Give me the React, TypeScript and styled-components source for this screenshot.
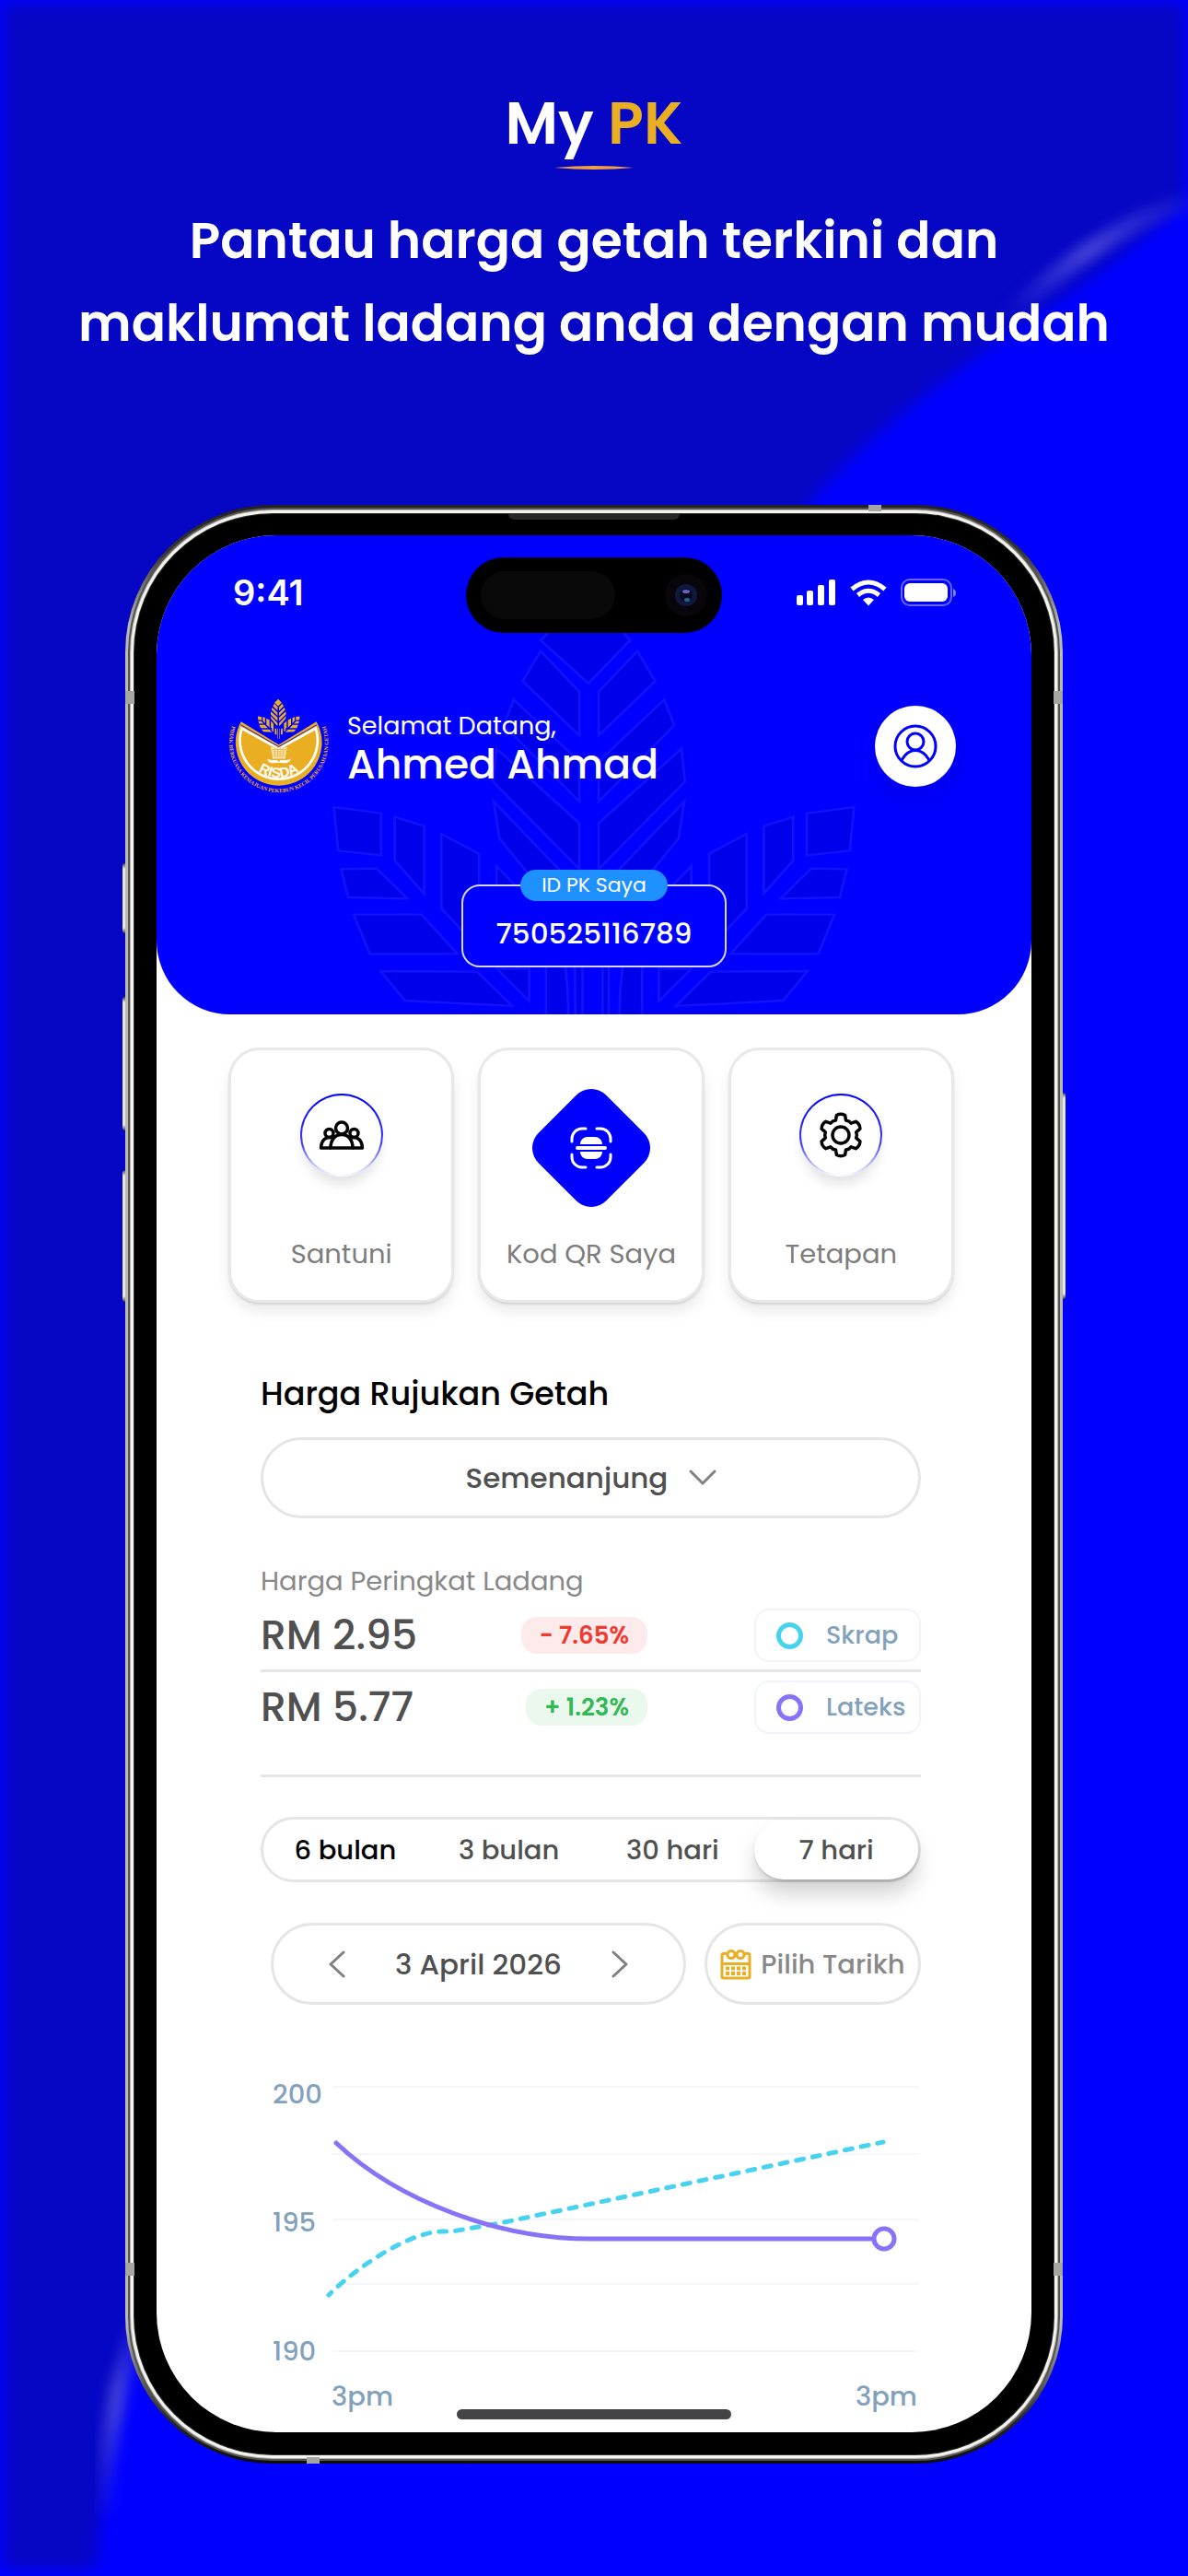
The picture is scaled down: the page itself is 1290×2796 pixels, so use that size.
import React from "react";
import styled, { createGlobalStyle } from "styled-components";

const GlobalStyle = createGlobalStyle`
  *, *::before, *::after { box-sizing: border-box; }
  body {
    margin: 0;
    background: #0000ff;
    font-family: Poppins, Inter, "Open Sans", sans-serif;
    -webkit-font-smoothing: antialiased;
  }
  h1, h2, p { margin: 0; }
  button, select {
    font: inherit;
    color: inherit;
    margin: 0;
    padding: 0;
    border: 0;
    background: none;
    cursor: pointer;
  }
`;

const gold = "#e9ae22";
const cyan = "#47d3ef";
const purple = "#8a72f8";
const line = "#e5e5e5";
const slate = "#82a1bb";

/* ---------- promo page ---------- */

const Page = styled.main`
  position: relative;
  min-height: 100vh;
  display: flex;
  flex-direction: column;
  align-items: center;
  padding: 89px 40px 122px;
  overflow: hidden;
`;

const Backdrop = styled.svg`
  position: absolute;
  inset: 0;
  width: 100%;
  height: 100%;
`;

const Hero = styled.header`
  position: relative;
  display: flex;
  flex-direction: column;
  align-items: center;
  text-align: center;
  color: #fff;
`;

const Brand = styled.p`
  font-size: 64px;
  line-height: 90px;
  font-weight: 600;
`;

const BrandAccent = styled.span`
  color: ${gold};
`;

const Flourish = styled.svg`
  display: block;
  width: 86px;
  height: 6px;
`;

const Headline = styled.h1`
  margin-top: 31px;
  font-size: 55px;
  line-height: 90px;
  font-weight: 600;
`;

/* ---------- phone ---------- */

const Frame = styled.div`
  position: relative;
  width: 100%;
  max-width: 1018px;
  margin-top: 152px;
  padding: 10px;
  border-radius: 160px;
  background: linear-gradient(#24221f 0, #34322f 50px, #b9b9b5 130px, #b9b9b5 calc(100% - 150px), #2a2926 calc(100% - 50px), #0c0c0a 100%);
`;

const Bezel = styled.div`
  padding: 23px 24px 24px;
  border-radius: 150px;
  background: #000;
  box-shadow: 0 0 0 1px #33312d, 0 0 0 4px #f3f3ef, 0 0 0 5px #b5b4b0, 0 0 0 7px #55534f;
`;

const SideKey = styled.span<{ $side: "left" | "right"; $top: number; $length: number }>`
  position: absolute;
  ${(p) => p.$side}: -3px;
  top: ${(p) => p.$top}px;
  width: 3px;
  height: ${(p) => p.$length}px;
  border-radius: ${(p) => (p.$side === "left" ? "3px 0 0 3px" : "0 3px 3px 0")};
  background: linear-gradient(#44423f, #e6e6e3 6px, #e6e6e3 calc(100% - 6px), #44423f);
`;

const Antenna = styled.span<{ $edge: "left" | "right" | "top" | "bottom"; $at: number; $fromEnd?: boolean }>`
  position: absolute;
  background: #a5a5a2;
  ${(p) => p.$edge}: 0;
  ${(p) =>
    p.$edge === "left" || p.$edge === "right"
      ? `${p.$fromEnd ? "bottom" : "top"}: ${p.$at}px; width: 10px; height: 14px;`
      : `${p.$fromEnd ? "right" : "left"}: ${p.$at}px; width: 14px; height: 7px;`}
`;

const Speaker = styled.span`
  position: absolute;
  top: 10px;
  left: 50%;
  width: 186px;
  height: 6px;
  margin-left: -93px;
  border-radius: 0 0 6px 6px;
  background: #262626;
`;

const Screen = styled.div`
  position: relative;
  overflow: hidden;
  border-radius: 130px;
  background: #fff;
`;

const HomeBar = styled.span`
  position: absolute;
  left: 50%;
  bottom: 14px;
  width: 298px;
  height: 11px;
  margin-left: -149px;
  border-radius: 6px;
  background: #444446;
`;

/* ---------- app header ---------- */

const AppHeader = styled.header`
  position: relative;
  overflow: hidden;
  padding: 24px 77px 51px;
  border-radius: 0 0 80px 80px;
  background: #0000ff;
  color: #fff;
`;

const Watermark = styled.svg`
  position: absolute;
  left: 50%;
  top: 99px;
  width: 610px;
  height: 430px;
  margin-left: -305px;
  overflow: visible;
`;

const StatusBar = styled.div`
  position: relative;
  display: grid;
  grid-template-columns: 1fr auto 1fr;
  align-items: center;
`;

const Clock = styled.time`
  padding: 0 0 6px 6px;
  font-family: Inter, sans-serif;
  font-size: 38px;
  line-height: 48px;
  font-weight: 600;
`;

const Island = styled.div`
  width: 278px;
  height: 82px;
  display: flex;
  align-items: center;
  justify-content: space-between;
  padding: 0 16px;
  border-radius: 41px;
  background: #000;
`;

const Sensor = styled.span`
  width: 146px;
  height: 52px;
  border-radius: 26px;
  background: #090909;
`;

const Lens = styled.svg`
  width: 46px;
  height: 46px;
`;

const StatusIcons = styled.svg`
  justify-self: end;
  width: 174px;
  height: 30px;
  margin: 0 5px 6px 0;
`;

const Profile = styled.div`
  position: relative;
  display: flex;
  align-items: center;
  gap: 20px;
  margin-top: 70px;
  padding-right: 5px;
`;

const Emblem = styled.svg`
  flex: none;
  width: 110px;
  height: 105px;
`;

const Welcome = styled.div`
  flex: 1;
`;

const Greeting = styled.p`
  font-size: 27px;
  line-height: 40px;
  font-weight: 400;
`;

const UserName = styled.p`
  font-size: 44px;
  line-height: 44px;
  font-weight: 500;
`;

const AvatarButton = styled.button`
  display: grid;
  place-items: center;
  width: 88px;
  height: 88px;
  border-radius: 50%;
  background: #fff;
  box-shadow: 0 12px 40px rgba(0, 0, 120, 0.12);
`;

const IdBox = styled.div`
  position: relative;
  width: 288px;
  height: 90px;
  display: grid;
  place-items: center;
  margin: 98px auto 0;
  padding-top: 16px;
  border: 2px solid #d6d6ff;
  border-radius: 20px;
  background: #0000ff;
  font-size: 31px;
  line-height: 40px;
  font-weight: 500;
`;

const IdTag = styled.span`
  position: absolute;
  top: -18px;
  left: 50%;
  width: 160px;
  margin-left: -80px;
  border-radius: 17px;
  background: #1e90ff;
  font-size: 22px;
  line-height: 34px;
  font-weight: 400;
  text-align: center;
`;

/* ---------- shortcuts ---------- */

const Shortcuts = styled.nav`
  display: grid;
  grid-template-columns: repeat(3, 1fr);
  gap: 26px;
  padding: 36px 84px 0 78px;
`;

const ShortcutCard = styled.button`
  display: flex;
  flex-direction: column;
  align-items: center;
  padding: 41px 0 30px;
  border: 3px solid #e8e8e8;
  border-radius: 34px;
  background: #fff;
  box-shadow: 0 2px 2px rgba(0, 0, 0, 0.1), 0 10px 14px rgba(0, 0, 0, 0.08);
  color: #7d7d7d;
  font-size: 29px;
  line-height: 40px;
`;

const IconSlot = styled.span`
  display: flex;
  justify-content: center;
  width: 130px;
  height: 129px;
  margin-bottom: 31px;
`;

const RoundIcon = styled.span`
  display: grid;
  place-items: center;
  width: 90px;
  height: 90px;
  margin-top: 6px;
  border: 2px solid transparent;
  border-radius: 50%;
  background: linear-gradient(#fff, #fff) padding-box, linear-gradient(#0000ff, #3c3cff 60%, #fff) border-box;
  box-shadow: 0 12px 14px -4px rgba(0, 0, 0, 0.12);
`;

/* ---------- prices ---------- */

const Content = styled.section`
  padding: 74px 120px 0 113px;
`;

const SectionTitle = styled.h2`
  color: #000;
  font-size: 35px;
  line-height: 50px;
  font-weight: 500;
`;

const RegionField = styled.div`
  display: flex;
  align-items: center;
  justify-content: center;
  gap: 22px;
  height: 88px;
  margin-top: 22px;
  border: 3px solid ${line};
  border-radius: 44px;
  color: #505050;
`;

const RegionSelect = styled.select`
  appearance: none;
  outline: none;
  font-size: 31px;
  line-height: 44px;
  font-weight: 500;
`;

const PriceCaption = styled.p`
  margin: 48px 0 10px;
  color: #888;
  font-size: 29px;
  line-height: 40px;
`;

const PriceRow = styled.div<{ $last?: boolean }>`
  display: grid;
  grid-template-columns: 1fr auto 181px;
  align-items: center;
  padding: ${(p) => (p.$last ? "9px 0 44px" : "0 0 8px")};
  border-bottom: 3px solid ${line};
`;

const Price = styled.span`
  color: #505050;
  font-size: 44px;
  line-height: 58px;
  font-weight: 500;
  white-space: nowrap;
`;

const Change = styled.span<{ $up?: boolean }>`
  margin-right: 116px;
  padding: 0 20px;
  border-radius: 17px;
  background: ${(p) => (p.$up ? "#eaf8ed" : "#fdeaea")};
  color: ${(p) => (p.$up ? "#34b856" : "#ee3a30")};
  font-size: 26px;
  line-height: 40px;
  font-weight: 600;
  white-space: nowrap;
`;

const Legend = styled.span<{ $color: string }>`
  display: flex;
  align-items: center;
  gap: 25px;
  height: 58px;
  padding-left: 22px;
  border: 2px solid #f0f4fa;
  border-radius: 16px;
  color: ${slate};
  font-size: 27px;
  line-height: 40px;
  font-weight: 500;

  &::before {
    content: "";
    width: 29px;
    height: 29px;
    border: 5px solid ${(p) => p.$color};
    border-radius: 50%;
  }
`;

/* ---------- period controls ---------- */

const Segments = styled.div`
  display: grid;
  grid-template-columns: repeat(4, 1fr);
  height: 71px;
  margin-top: 43px;
  border: 3px solid ${line};
  border-radius: 36px;
`;

const Segment = styled.button<{ $active?: boolean; $strong?: boolean }>`
  border-radius: 33px;
  color: ${(p) => (p.$strong ? "#000" : "#505050")};
  font-size: 29px;
  line-height: 40px;
  font-weight: 500;
  background: ${(p) => (p.$active ? "#fff" : "none")};
  box-shadow: ${(p) => (p.$active ? "0 2px 3px rgba(0,0,0,.12), 0 16px 24px -2px rgba(0,0,0,.2)" : "none")};
`;

const DateRow = styled.div`
  display: flex;
  gap: 20px;
  margin-top: 44px;
  padding-left: 11px;
`;

const DateStepper = styled.div`
  flex: 1;
  display: flex;
  align-items: center;
  justify-content: space-between;
  height: 89px;
  padding: 0 58px;
  border: 3px solid ${line};
  border-radius: 45px;
  color: #505050;
  font-size: 31px;
  line-height: 40px;
  font-weight: 500;
  white-space: nowrap;
`;

const StepButton = styled.button`
  display: grid;
  place-items: center;
  width: 22px;
  height: 40px;
`;

const PickDate = styled.button`
  display: flex;
  align-items: center;
  justify-content: center;
  gap: 10px;
  width: 235px;
  height: 89px;
  border: 3px solid ${line};
  border-radius: 45px;
  color: #888;
  font-size: 29px;
  line-height: 40px;
  font-weight: 500;
  white-space: nowrap;
`;

const Chart = styled.svg`
  display: block;
  width: 100%;
  margin-top: 64px;
`;

const AxisText = styled.text`
  fill: ${slate};
  font-size: 29px;
  font-weight: 500;
`;

/* ---------- drawings ---------- */

type Point = [number, number];

const innerLeaves: Point[][] = [
  [[905, 80], [955, 178], [797, 355], [797, 212]],
  [[980, 238], [1008, 322], [797, 570], [797, 440]],
  [[1028, 398], [1038, 505], [797, 790], [797, 640]],
  [[1036, 570], [1020, 690], [950, 790], [860, 920], [797, 980], [797, 860]],
];

const outerLeaves: Point[][] = [
  [[1510, 588], [1498, 730], [1378, 745], [1378, 608]],
  [[1340, 620], [1340, 762], [1258, 870], [1258, 650]],
  [[1210, 675], [1210, 918], [1105, 1050], [1105, 740]],
  [[1056, 780], [1056, 1040], [965, 1150], [965, 890]],
  [[1490, 790], [1470, 882], [1305, 886], [1390, 788]],
  [[1455, 938], [1410, 1066], [1165, 1066], [1265, 938]],
  [[1380, 1122], [1312, 1218], [1012, 1236], [1110, 1124]],
  [[965, 1115], [1055, 1115], [965, 1220]],
];

const toPoints = (points: Point[], mirror?: number) =>
  points.map(([x, y]) => `${mirror === undefined ? x : mirror - x},${y}`).join(" ");

function Plant() {
  return (
    <>
      <polygon points="768,-111 885,45 768,185 635,45" />
      {innerLeaves.map((leaf, i) => (
        <React.Fragment key={i}>
          <polygon points={toPoints(leaf)} />
          <polygon points={toPoints(leaf, 1540)} />
        </React.Fragment>
      ))}
      {outerLeaves.map((leaf, i) => (
        <React.Fragment key={i}>
          <polygon points={toPoints(leaf)} />
          <polygon points={toPoints(leaf, 1568)} />
        </React.Fragment>
      ))}
      <path d="M650 1080H700Q715 1180 712 1330H650ZM730 1080H752V1500H735ZM808 1080H825V1500H808ZM868 1080H918V1330H856Q852 1180 868 1080Z" />
    </>
  );
}

function PageBackdrop() {
  return (
    <Backdrop viewBox="0 0 1290 2796" preserveAspectRatio="none" aria-hidden="true">
      <defs>
        <filter id="soft" x="-5%" y="-5%" width="110%" height="110%" colorInterpolationFilters="sRGB">
          <feGaussianBlur stdDeviation="8" />
        </filter>
        <filter id="glow" x="-20%" y="-20%" width="140%" height="140%" colorInterpolationFilters="sRGB">
          <feGaussianBlur stdDeviation="7" />
        </filter>
        <linearGradient id="streak" x1="1" y1="0" x2="0" y2="1">
          <stop offset="0" stopColor="#7a7aff" stopOpacity="0.1" />
          <stop offset="0.5" stopColor="#8080e8" stopOpacity="0.52" />
          <stop offset="1" stopColor="#7a7aff" stopOpacity="0.05" />
        </linearGradient>
      </defs>
      <rect width="1290" height="2796" fill="#0000ff" />
      <path
        filter="url(#soft)"
        fill="#0606c5"
        d="M4 4H1286V224C1240 258 1200 294 1150 326C1060 384 930 478 872 556C560 960 250 1800 142 2560C124 2640 112 2700 104 2788H4Z"
      />
      <path filter="url(#glow)" fill="none" stroke="url(#streak)" strokeWidth="20" strokeLinecap="round" d="M1286 220C1225 238 1160 284 1100 338" />
      <path filter="url(#glow)" fill="none" stroke="url(#streak)" strokeWidth="20" strokeLinecap="round" d="M148 2530C128 2590 114 2650 111 2720" />
    </Backdrop>
  );
}

function RisdaEmblem() {
  return (
    <Emblem viewBox="50 50 330 316" role="img" aria-label="RISDA">
      <defs>
        <path id="motto" d="M74 122A162 162 0 1 0 360 122" />
        <path id="risda" d="M104 222A116 116 0 0 0 330 222" />
      </defs>
      <g fill={gold} transform="translate(143 64) scale(0.0944 0.0808)">
        <Plant />
      </g>
      <path fill={gold} d="M94 129L217 204L340 129L346 140A141 141 0 1 1 88 140Z" />
      <path fill="none" stroke="#1a1ad8" strokeWidth="3" d="M92 139L217 211L342 139" />
      <path fill={gold} stroke="#fff" strokeWidth="8" strokeLinejoin="miter" d="M96 151L217 218L338 151A127 127 0 1 1 96 151Z" />
      <path fill="#fbeccb" d="M191 213H244L238 250H197Z" />
      <path stroke={gold} strokeWidth="2" d="M192 220H243M193 227H242M194 234H241M195 241H240M203 213L206 250M213 213L214 250M222 213L221 250M232 213L229 250" />
      <path fill="#fff" d="M180 250C192 258 205 252 214 256L217 262L221 256C232 252 244 258 256 250C254 264 238 266 228 264H206C194 266 182 264 180 250Z" />
      <text fill="#fff" fontFamily="Liberation Sans, Arial, sans-serif" fontWeight="700" fontSize="46" textAnchor="middle">
        <textPath href="#risda" startOffset="50%">RISDA</textPath>
      </text>
      <text fill={gold} fontFamily="Liberation Serif, serif" fontWeight="700" fontSize="18" textAnchor="middle">
        <textPath href="#motto" startOffset="50%">PIHAK BERKUASA KEMAJUAN PEKEBUN KECIL PERUSAHAAN GETAH</textPath>
      </text>
    </Emblem>
  );
}

function PeopleIcon() {
  return (
    <svg width="50" height="34" viewBox="0 0 50 34" fill="none" stroke="#000" strokeWidth="3.500" strokeLinejoin="round">
      <circle cx="25" cy="9.500" r="6.500" />
      <path d="M13 31C13 22 18 16.500 25 16.500S37 22 37 31Z" />
      <circle cx="11.500" cy="15" r="4.500" />
      <circle cx="38.500" cy="15" r="4.500" />
      <path d="M15 20C7 18 3 23 2.500 31H13M35 20C43 18 47 23 47.500 31H37" />
    </svg>
  );
}

function GearIcon() {
  const at = (deg: number, r: number) => {
    const a = (deg * Math.PI) / 180;
    return `${(26 + r * Math.cos(a)).toFixed(1)} ${(26 + r * Math.sin(a)).toFixed(1)}`;
  };
  const outline = [0, 1, 2, 3, 4, 5]
    .map((k) => {
      const t = k * 60 - 90;
      return `${k ? "L" : "M"}${at(t - 19, 17)}L${at(t - 12, 22)}Q${at(t, 24)} ${at(t + 12, 22)}L${at(t + 19, 17)}Q${at(t + 30, 18)} ${at(t + 41, 17)}`;
    })
    .join("");
  return (
    <svg width="52" height="52" viewBox="0 0 52 52" fill="none" stroke="#000" strokeWidth="3.500" strokeLinejoin="round">
      <path d={`${outline}Z`} />
      <circle cx="26" cy="26" r="9" />
    </svg>
  );
}

function QrDiamond() {
  return (
    <svg width="130" height="130" viewBox="0 0 130 130">
      <rect x="13" y="13" width="104" height="104" rx="23" fill="#0000ff" transform="rotate(45 65 65)" />
      <g fill="none" stroke="#fff" strokeWidth="3" strokeLinecap="round">
        <path d="M44 58V55A11 11 0 0 1 55 44H59M71 44H75A11 11 0 0 1 86 55V58M86 72V75A11 11 0 0 1 75 86H71M59 86H55A11 11 0 0 1 44 75V72" />
        <path d="M50 65H80" strokeWidth="4" />
      </g>
      <path fill="#fff" d="M53 61C53 56 57 53 61 53H69C73 53 77 56 77 61ZM53 69H77C77 74 73 77 69 77H61C57 77 53 74 53 69Z" />
    </svg>
  );
}

function AvatarIcon() {
  return (
    <svg width="50" height="50" viewBox="0 0 50 50" fill="none" stroke="#0000ff" strokeWidth="3">
      <circle cx="25" cy="25" r="22" />
      <circle cx="25" cy="20" r="9" />
      <path d="M10 40C14 33 19 29.500 25 29.500S36 33 40 40" />
    </svg>
  );
}

function Chevron({ dir }: { dir: "down" | "left" | "right" }) {
  const down = dir === "down";
  const d = { down: "M2 2L15 15L28 2", left: "M17 2L3 15L17 28", right: "M3 2L17 15L3 28" }[dir];
  return (
    <svg width={down ? 30 : 20} height={down ? 18 : 30} viewBox={down ? "0 0 30 18" : "0 0 20 30"} fill="none" stroke="#808080" strokeWidth="3" strokeLinecap="round" strokeLinejoin="round">
      <path d={d} />
    </svg>
  );
}

function CalendarIcon() {
  return (
    <svg width="34" height="34" viewBox="0 0 34 34" fill="none" stroke={gold} strokeWidth="3">
      <path d="M8 5.500H3.500Q2 5.500 2 7V30.500Q2 32 3.500 32H30.500Q32 32 32 30.500V7Q32 5.500 30.500 5.500H26M2 16.500H32" />
      <circle cx="12" cy="6.500" r="4" />
      <circle cx="22" cy="6.500" r="4" />
      <path d="M6 21.500H28M6 27H28" strokeDasharray="4 2" strokeWidth="4" />
    </svg>
  );
}

function PriceChart() {
  return (
    <Chart viewBox="0 0 717 400" role="img" aria-label="Harga Rujukan Getah">
      <g stroke="#f3f6fa" strokeWidth="2">
        {[25, 98, 169, 239, 312].map((y) => (
          <path key={y} d={`M78 ${y}H715`} />
        ))}
      </g>
      <AxisText x="13" y="43">200</AxisText>
      <AxisText x="13" y="182">195</AxisText>
      <AxisText x="13" y="322">190</AxisText>
      <AxisText x="77" y="371">3pm</AxisText>
      <AxisText x="713" y="371" textAnchor="end">3pm</AxisText>
      <path
        d="M74 251C108 217 165 182 197 182H208L260 173L676 85"
        fill="none"
        stroke={cyan}
        strokeWidth="5"
        strokeLinecap="round"
        strokeDasharray="8 10"
        strokeDashoffset="4"
      />
      <path d="M82 86C150 150 260 190 357 190H670" fill="none" stroke={purple} strokeWidth="5" strokeLinecap="round" />
      <circle cx="677" cy="190" r="11" fill="#fff" stroke={purple} strokeWidth="5" />
    </Chart>
  );
}

export default function App() {
  return (
    <>
      <GlobalStyle />
      <Page>
        <PageBackdrop />
        <Hero>
          <Brand>
            My <BrandAccent>PK</BrandAccent>
          </Brand>
          <Flourish viewBox="0 0 86 6" aria-hidden="true">
            <path d="M0 3Q43 -1 86 3Q43 7 0 3Z" fill="#f0a040" />
          </Flourish>
          <Headline>
            Pantau harga getah terkini dan
            <br />
            maklumat ladang anda dengan mudah
          </Headline>
        </Hero>

        <Frame>
          <SideKey $side="left" $top={389} $length={76} />
          <SideKey $side="left" $top={534} $length={145} />
          <SideKey $side="left" $top={722} $length={143} />
          <SideKey $side="right" $top={638} $length={224} />
          <Bezel>
            <Screen>
              <AppHeader>
                <Watermark viewBox="0 0 1568 1290" preserveAspectRatio="none" aria-hidden="true">
                  <g fill="#0000ea" stroke="#1212ff" strokeWidth="7">
                    <Plant />
                  </g>
                </Watermark>
                <StatusBar>
                  <Clock>9:41</Clock>
                  <Island>
                    <Sensor />
                    <Lens viewBox="0 0 46 46">
                      <circle cx="23" cy="23" r="23" fill="#08060a" />
                      <circle cx="23" cy="23" r="12" fill="#10183e" />
                      <circle cx="23" cy="23" r="7" fill="#070720" />
                      <ellipse cx="23" cy="19" rx="4" ry="2" fill="#6a62c8" />
                      <ellipse cx="24" cy="28" rx="3" ry="2" fill="#1f6a8c" />
                    </Lens>
                  </Island>
                  <StatusIcons viewBox="0 0 174 30" fill="#fff" aria-hidden="true">
                    <rect x="1" y="18" width="7" height="11" rx="2" />
                    <rect x="12" y="13" width="7" height="16" rx="2" />
                    <rect x="24" y="7" width="7" height="22" rx="2" />
                    <rect x="36" y="1" width="7" height="28" rx="2" />
                    <g fill="none" stroke="#fff" strokeWidth="5">
                      <path d="M61 11.500Q79 -3.500 97 11.500" />
                      <path d="M67.500 18Q79 8.500 90.500 18" />
                    </g>
                    <path d="M73 23Q79 18 85 23L79 29.500Z" />
                    <rect x="115" y="1" width="54" height="28" rx="9" fill="none" stroke="#fff" strokeOpacity="0.4" strokeWidth="2" />
                    <rect x="118" y="5" width="47" height="20" rx="6" />
                    <path d="M171 11Q174 12 174 15.500T171 20Z" fillOpacity="0.5" />
                  </StatusIcons>
                </StatusBar>
                <Profile>
                  <RisdaEmblem />
                  <Welcome>
                    <Greeting>Selamat Datang,</Greeting>
                    <UserName>Ahmed Ahmad</UserName>
                  </Welcome>
                  <AvatarButton type="button" aria-label="Ahmed Ahmad">
                    <AvatarIcon />
                  </AvatarButton>
                </Profile>
                <IdBox>
                  <IdTag>ID PK Saya</IdTag>
                  750525116789
                </IdBox>
              </AppHeader>

              <Shortcuts>
                <ShortcutCard type="button">
                  <IconSlot>
                    <RoundIcon>
                      <PeopleIcon />
                    </RoundIcon>
                  </IconSlot>
                  Santuni
                </ShortcutCard>
                <ShortcutCard type="button">
                  <IconSlot>
                    <QrDiamond />
                  </IconSlot>
                  Kod QR Saya
                </ShortcutCard>
                <ShortcutCard type="button">
                  <IconSlot>
                    <RoundIcon>
                      <GearIcon />
                    </RoundIcon>
                  </IconSlot>
                  Tetapan
                </ShortcutCard>
              </Shortcuts>

              <Content>
                <SectionTitle id="harga">Harga Rujukan Getah</SectionTitle>
                <RegionField>
                  <RegionSelect aria-labelledby="harga" defaultValue="Semenanjung">
                    <option>Semenanjung</option>
                  </RegionSelect>
                  <Chevron dir="down" />
                </RegionField>

                <PriceCaption>Harga Peringkat Ladang</PriceCaption>
                <PriceRow>
                  <Price>RM 2.95</Price>
                  <Change>- 7.65%</Change>
                  <Legend $color={cyan}>Skrap</Legend>
                </PriceRow>
                <PriceRow $last>
                  <Price>RM 5.77</Price>
                  <Change $up>+ 1.23%</Change>
                  <Legend $color={purple}>Lateks</Legend>
                </PriceRow>

                <Segments>
                  <Segment type="button" $strong>6 bulan</Segment>
                  <Segment type="button">3 bulan</Segment>
                  <Segment type="button">30 hari</Segment>
                  <Segment type="button" aria-pressed="true" $active>7 hari</Segment>
                </Segments>

                <DateRow>
                  <DateStepper>
                    <StepButton type="button" aria-label="3 April 2026">
                      <Chevron dir="left" />
                    </StepButton>
                    <span>3 April 2026</span>
                    <StepButton type="button" aria-label="3 April 2026">
                      <Chevron dir="right" />
                    </StepButton>
                  </DateStepper>
                  <PickDate type="button">
                    <CalendarIcon />
                    Pilih Tarikh
                  </PickDate>
                </DateRow>

                <PriceChart />
              </Content>
              <HomeBar />
            </Screen>
          </Bezel>
          <Speaker />
          <Antenna $edge="left" $at={202} />
          <Antenna $edge="right" $at={202} />
          <Antenna $edge="left" $at={204} $fromEnd />
          <Antenna $edge="right" $at={204} $fromEnd />
          <Antenna $edge="top" $at={197} $fromEnd />
          <Antenna $edge="bottom" $at={197} />
        </Frame>
      </Page>
    </>
  );
}
